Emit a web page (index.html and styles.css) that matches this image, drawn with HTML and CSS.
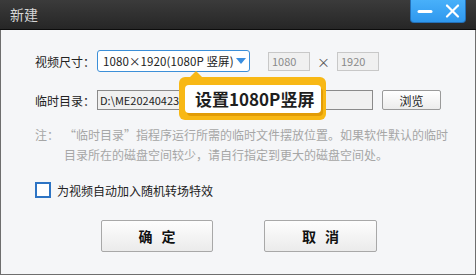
FILE: index.html
```html
<!DOCTYPE html>
<html lang="zh-CN">
<head>
  <meta charset="UTF-8">
  <title>新建</title>
  <link rel="stylesheet" href="styles.css">
</head>
<body>
  <div class="window">
    <!-- 标题栏 -->
    <div class="titlebar">
      <span class="title">新建</span>
      <div class="sys-btns">
        <svg width="55" height="22" viewBox="0 0 55 22">
          <line x1="8" y1="11.5" x2="20" y2="11.5" stroke="#fff" stroke-width="3" stroke-linecap="round"/>
          <line x1="36" y1="5.5" x2="47" y2="16.5" stroke="#fff" stroke-width="2.2" stroke-linecap="round"/>
          <line x1="47" y1="5.5" x2="36" y2="16.5" stroke="#fff" stroke-width="2.2" stroke-linecap="round"/>
        </svg>
      </div>
    </div>

    <div class="content">
      <div class="row row-size">
        <label class="label">视频尺寸：</label>
        <div class="select">
          <span class="select-text">1080×1920(1080P 竖屏)</span>
          <svg class="arrow" width="10" height="6" viewBox="0 0 10 6"><path d="M0 0 H10 L5 6 Z" fill="#3a8ee0"/></svg>
        </div>
        <input class="num" type="text" value="1080" disabled>
        <span class="times">×</span>
        <input class="num" type="text" value="1920" disabled>
      </div>

      <div class="row row-dir">
        <label class="label">临时目录：</label>
        <input class="path" type="text" value="D:\ME20240423">
        <button class="browse">浏览</button>
      </div>

      <div class="note">
        <span class="note-head">注：</span>
        <p>“临时目录”指程序运行所需的临时文件摆放位置。如果软件默认的临时<br>目录所在的磁盘空间较少，请自行指定到更大的磁盘空间处。</p>
      </div>

      <label class="check">
        <span class="box"></span>
        为视频自动加入随机转场特效
      </label>

      <div class="actions">
        <button class="btn">确 定</button>
        <button class="btn">取 消</button>
      </div>
    </div>

    <!-- 提示气泡 -->
    <div class="tip">
      <div class="tip-inner">设置1080P竖屏</div>
    </div>
  </div>
</body>
</html>
```

FILE: styles.css
```css
* {
  margin: 0;
  padding: 0;
  box-sizing: border-box;
}
body {
  width: 476px;
  height: 275px;
  font-family: "Noto Sans CJK SC", "Noto Sans", sans-serif;
  font-size: 12px;
  color: #222;
  overflow: hidden;
}
.window {
  position: relative;
  width: 476px;
  height: 275px;
  display: flex;
  flex-direction: column;
}
.titlebar {
  height: 30px;
  background: linear-gradient(#3b3b3b, #262626);
  border-bottom: 1px solid #0c0c0c;
  display: flex;
  justify-content: space-between;
  align-items: flex-start;
}
.title {
  color: #d6d6d6;
  font-size: 14px;
  line-height: 29px;
  padding-left: 10px;
}
.sys-btns {
  width: 56px;
  height: 23px;
  margin-right: 10px;
  background: linear-gradient(#48b0fa, #2f98ee);
  border: 1px solid #2470b8;
  border-top: none;
  border-radius: 0 0 4px 4px;
}
.sys-btns svg {
  display: block;
}
.content {
  flex: 1;
  background: #f5f6f8;
  border: 1px solid #6e6e6e;
  border-top: none;
  padding: 20px 0 0 34px;
}
.row {
  display: flex;
  align-items: center;
}
.label {
  width: 62px;
  font-size: 12px;
  color: #222;
}
.row-size {
  height: 22px;
}
.select {
  width: 153px;
  height: 22px;
  background: #fff;
  border: 1px solid #3c8fd8;
  border-radius: 3px;
  display: flex;
  align-items: center;
  justify-content: space-between;
  padding: 0 3px 0 5px;
  white-space: nowrap;
}
.select-text {
  font-size: 11.5px;
  letter-spacing: 0.1px;
}
.num {
  width: 42px;
  height: 19px;
  margin-left: 18px;
  background: #f0f0f0;
  border: 1px solid #c8c8c8;
  color: #8a8a8a;
  font-family: inherit;
  font-size: 11px;
  padding-left: 3px;
}
.times {
  margin-left: 7px;
  color: #555;
  font-size: 13px;
}
.times + .num {
  margin-left: 7px;
}
.row-dir {
  height: 20px;
  margin-top: 18px;
}
.path {
  width: 276px;
  height: 20px;
  background: #f0f0f0;
  border: 1px solid #8a8a8a;
  font-family: inherit;
  font-size: 11px;
  color: #222;
  padding-left: 2px;
}
.browse {
  width: 59px;
  height: 20px;
  margin-left: 9px;
  background: linear-gradient(#fff, #ececec);
  border: 1px solid #9a9a9a;
  border-radius: 2px;
  font-family: inherit;
  font-size: 12px;
  color: #222;
}
.note {
  display: flex;
  margin-top: 15px;
  color: #a6a6a6;
  font-size: 12px;
  line-height: 20px;
  white-space: nowrap;
}
.note-head {
  flex: none;
  width: 29px;
}
.check {
  display: flex;
  align-items: center;
  height: 16px;
  margin-top: 17px;
  font-size: 12px;
  color: #222;
}
.box {
  width: 16px;
  height: 16px;
  margin-right: 6px;
  background: #fff;
  border: 2px solid #2d74c4;
}
.actions {
  display: flex;
  gap: 51px;
  margin-top: 22px;
  padding-left: 66px;
}
.btn {
  width: 112px;
  height: 32px;
  background: linear-gradient(#fdfdfd, #ebebeb);
  border: 1px solid #a8a8a8;
  border-radius: 2px;
  font-family: inherit;
  font-size: 14px;
  font-weight: bold;
  color: #111;
  letter-spacing: 3px;
  padding-left: 3px;
}
.btn + .btn {
  width: 113px;
}
.tip {
  position: absolute;
  left: 179px;
  top: 77px;
  width: 147px;
  height: 43px;
  background: #f8b815;
  border-radius: 6px;
  padding: 8px 5px 7px 6px;
}
.tip::before {
  content: "";
  position: absolute;
  left: 11px;
  top: -6px;
  border-left: 6px solid transparent;
  border-right: 6px solid transparent;
  border-bottom: 6px solid #f8b815;
}
.tip-inner {
  height: 28px;
  background: #fff;
  border-radius: 4px;
  box-shadow: 2px 3px 0 #e29c06;
  font-size: 17px;
  font-weight: bold;
  color: #1e1e1e;
  line-height: 28px;
  padding-left: 10px;
}
```
